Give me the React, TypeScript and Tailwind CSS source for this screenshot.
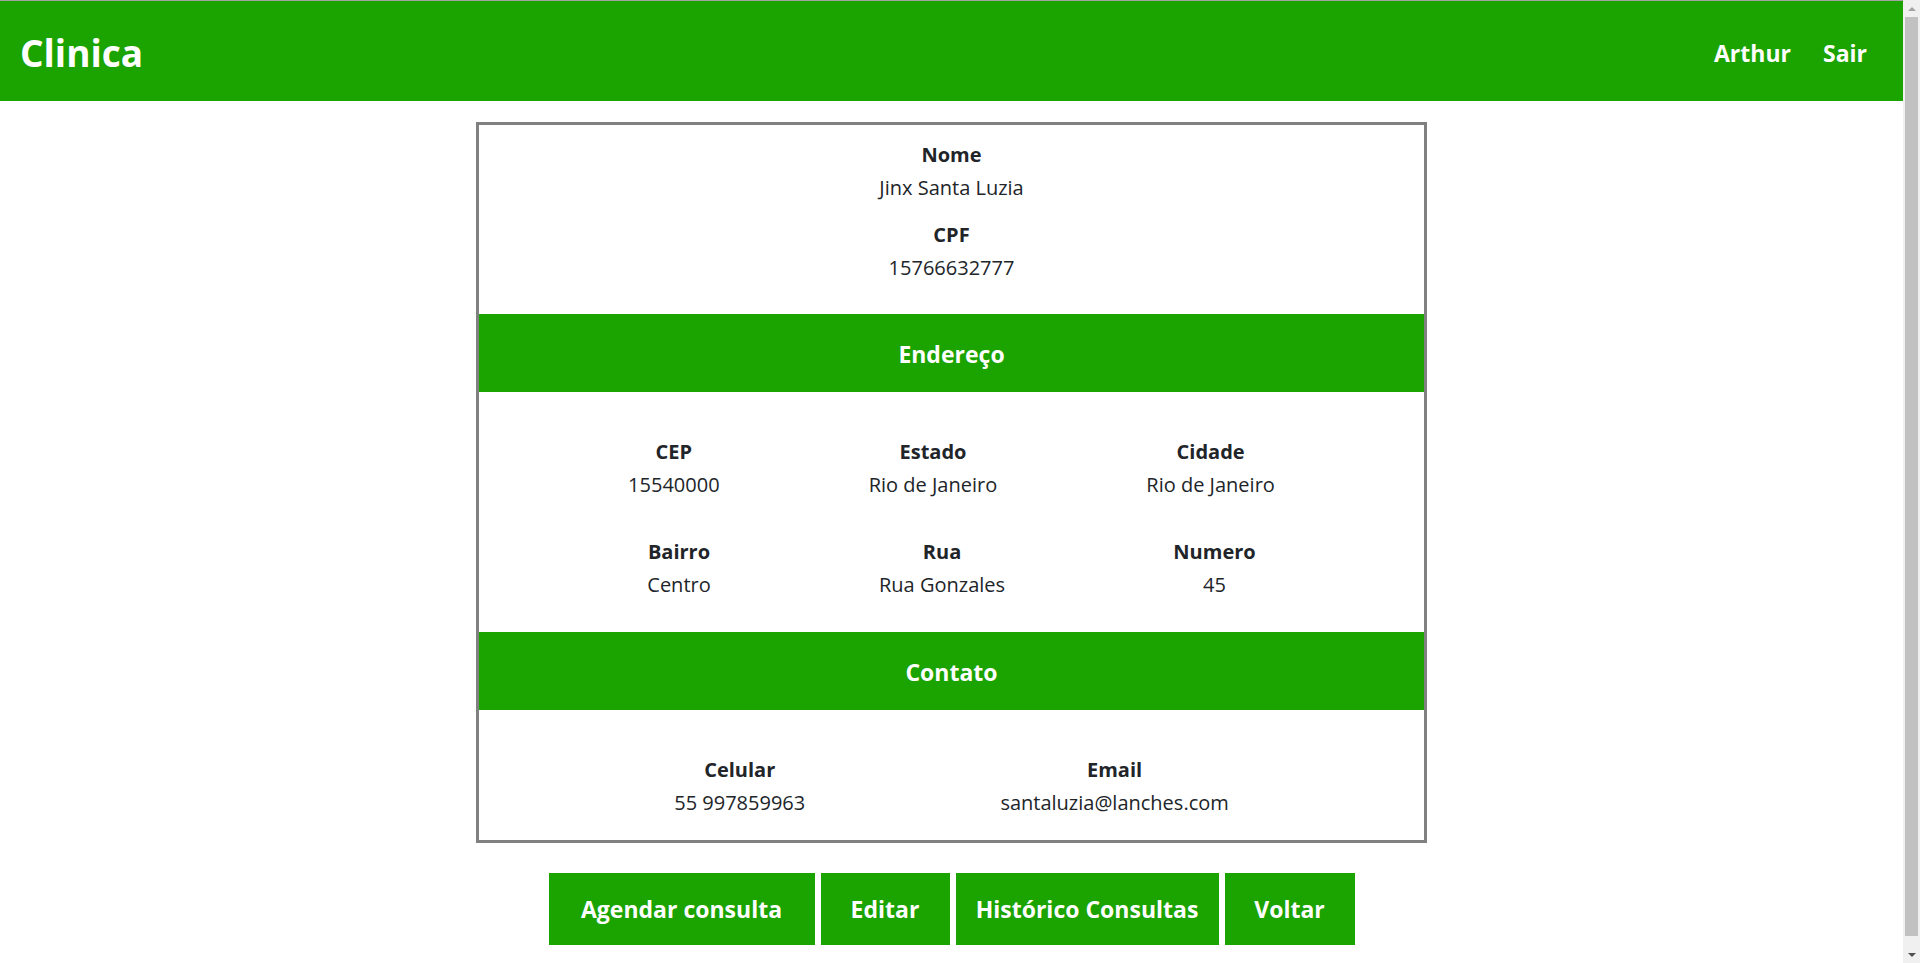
import React from 'react';

const paciente = {
    nome: 'Jinx Santa Luzia',
    cpf: '15766632777',
    cep: '15540000',
    estado: 'Rio de Janeiro',
    cidade: 'Rio de Janeiro',
    bairro: 'Centro',
    rua: 'Rua Gonzales',
    numero: '45',
    celular: '55 997859963',
    email: 'santaluzia@lanches.com',
};

const acoes = [
    { txt: 'Agendar consulta', w: 'w-[266px]' },
    { txt: 'Editar', w: 'w-[129px]' },
    { txt: 'Histórico Consultas', w: 'w-[263px]' },
    { txt: 'Voltar', w: 'w-[130px]' },
];

const Field = ({ label, value }: { label: string; value: string }) => (
    <div className="text-center text-[20px] leading-[33px]">
        <p className="font-bold">{label}</p>
        <p>{value}</p>
    </div>
);

const Band = ({ title }: { title: string }) => (
    <div className="flex h-[78px] items-center justify-center bg-[#1ba300] pt-[3px] text-[23px] font-bold text-white">
        {title}
    </div>
);

// barra de rolagem desenhada (a janela original tinha uma)
const ScrollBar = () => (
    <div className="fixed right-0 top-0 flex h-screen w-[17px] flex-col items-center bg-[#f0f0f0]">
        <div className="flex h-[17px] items-center justify-center">
            <div className="h-0 w-0 border-x-[4px] border-b-[4px] border-x-transparent border-b-[#a3a3a3]" />
        </div>
        <div className="mb-[10px] w-[13px] flex-1 bg-[#c1c1c1]" />
        <div className="flex h-[17px] items-center justify-center">
            <div className="h-0 w-0 border-x-[4px] border-t-[4px] border-x-transparent border-t-[#505050]" />
        </div>
    </div>
);

const App = () => {
    return (
        <div className="min-h-screen bg-white pb-[32px] pr-[17px] font-['Open_Sans',sans-serif] text-[#212529]">
            <header className="flex h-[101px] items-center justify-between border-t border-[#a3a3a3] bg-[#1ba300] pl-[20px] pr-[36px] pt-[4px] text-white">
                <span className="text-[37px] font-bold">Clinica</span>
                <nav className="flex gap-[32px] text-[23px] font-bold">
                    <a href="#">Arthur</a>
                    <a href="#">Sair</a>
                </nav>
            </header>

            <div className="mx-auto mt-[21px] w-[951px] border-[3px] border-[#808080]">
                {/* dados pessoais */}
                <div className="flex flex-col gap-[14px] pb-[30px] pt-[13px]">
                    <Field label="Nome" value={paciente.nome} />
                    <Field label="CPF" value={paciente.cpf} />
                </div>

                <Band title="Endereço" />
                <div className="flex flex-col gap-[34px] pb-[31px] pt-[43px]">
                    <div className="flex justify-evenly">
                        <Field label="CEP" value={paciente.cep} />
                        <Field label="Estado" value={paciente.estado} />
                        <Field label="Cidade" value={paciente.cidade} />
                    </div>
                    <div className="flex justify-evenly">
                        <Field label="Bairro" value={paciente.bairro} />
                        <Field label="Rua" value={paciente.rua} />
                        <Field label="Numero" value={paciente.numero} />
                    </div>
                </div>

                <Band title="Contato" />
                <div className="flex justify-evenly pb-[21px] pt-[43px]">
                    <Field label="Celular" value={paciente.celular} />
                    <Field label="Email" value={paciente.email} />
                </div>
            </div>

            <div className="mt-[30px] flex justify-center gap-[6px]">
                {acoes.map((a) => (
                    <button
                        key={a.txt}
                        className={`${a.w} h-[72px] whitespace-nowrap bg-[#1ba300] text-[23px] font-bold text-white`}
                    >
                        {a.txt}
                    </button>
                ))}
            </div>

            <ScrollBar />
        </div>
    );
};

export default App;
